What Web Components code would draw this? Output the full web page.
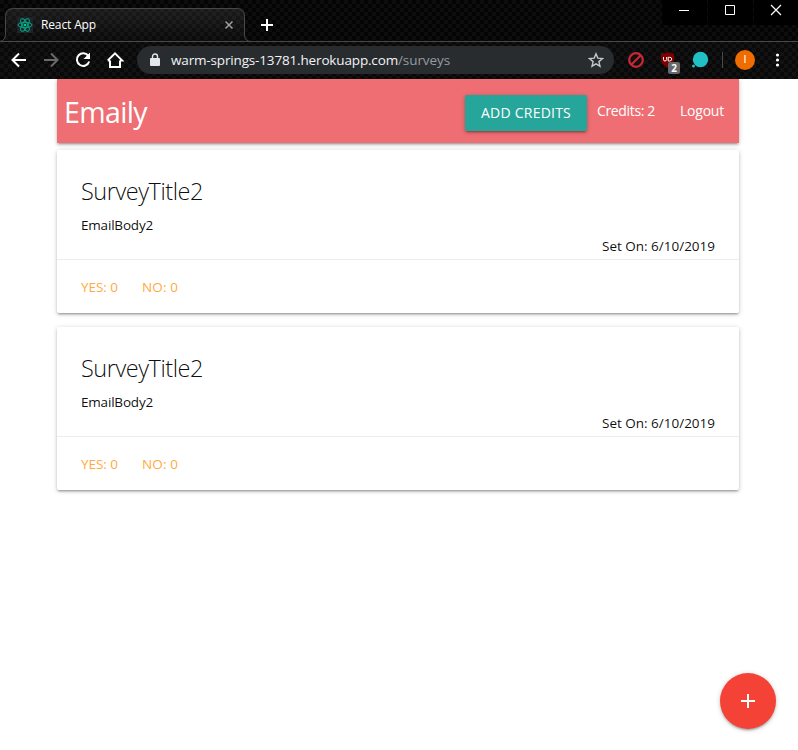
<!DOCTYPE html>
<html lang="en"><head><meta charset="utf-8"><title>React App</title>
<style>html,body{margin:0;height:100%;overflow:hidden;background:#fff;font-family:"Open Sans","Noto Sans",sans-serif}</style></head>
<body><app-window></app-window>
<script>
const define=(name,html,setup)=>customElements.define(name,class extends HTMLElement{
  connectedCallback(){
    if(!this.shadowRoot){this.attachShadow({mode:'open'}).innerHTML=html;if(setup)setup(this)}
  }
});
/* Text run whose tracking is adjusted to fill the width given in w. */
define('fit-text','<style>:host{display:inline-block;white-space:nowrap;flex:none}span{display:inline-block}</style><span></span>',el=>{
  const s=el.shadowRoot.querySelector('span');s.textContent=el.getAttribute('text');
  const w=+el.getAttribute('w');
  requestAnimationFrame(()=>{const n=s.getBoundingClientRect().width;s.style.letterSpacing=((w-n)/s.textContent.length)+'px';el.style.width=w+'px'});
});
define('browser-tab',`<style>
:host{display:block;position:relative;width:250px;height:42px;color:#fff}
.row{display:flex;align-items:center;height:33px;padding:8px 0 0 17px;font-size:12px;position:relative}
.shape{position:absolute;left:0;top:0}.logo{margin-right:8px}.close{margin-left:128px}
</style><svg class="shape" width="251" height="42"><defs><linearGradient id="g" x2="0" y2="1"><stop stop-color="#fff" stop-opacity=".09"/><stop offset="1" stop-color="#fff" stop-opacity=".02"/></linearGradient></defs><path d="M0 41.5Q5.500 40.500 5.500 34V16.500Q5.500 8.500 13.500 8.500H237Q244.500 8.500 244.500 16.500V34Q244.500 41.500 251 41.500" fill="url(#g)" stroke="#484848"/></svg>
<div class="row"><svg class="logo" width="16" height="16" viewBox="0 0 16 16"><path fill="#20232a" d="M0 0h16v16H0z"/><g fill="none" stroke="#00a985" stroke-width="1"><ellipse cx="8" cy="8" rx="7" ry="2.700"/><ellipse cx="8" cy="8" rx="7" ry="2.700" transform="rotate(60 8 8)"/><ellipse cx="8" cy="8" rx="7" ry="2.700" transform="rotate(120 8 8)"/></g><circle cx="8" cy="8" r="1.300" fill="#00c99b"/></svg><fit-text text="React App" w="55"></fit-text><svg class="close" width="10" height="10"><path d="M1.500 1.500l7 7m0-7l-7 7" stroke="#a0a0a0" stroke-width="1.500"/></svg></div>`);
define('window-controls',`<style>:host{display:flex;height:25px;gap:1px;margin-left:auto}span{width:45px;background:#000;height:25px}span:last-child{width:44px}svg{display:block}</style>
<span><svg width="45" height="25"><path d="M17 10.500h10" stroke="#fff"/></svg></span><span><svg width="45" height="25"><path d="M17.500 5.500h9v9h-9z" fill="none" stroke="#fff"/></svg></span><span><svg width="44" height="25"><path d="M17 5l10 10m0-10l-10 10" stroke="#fff" stroke-width="1.200"/></svg></span>`);
define('tool-bar',`<style>
:host{display:flex;align-items:center;border-top:1px solid #484848;box-sizing:border-box;background:rgba(255,255,255,.025);padding:0 0 1px 10px;height:38px;width:798px}
svg{flex:none;display:block}.omni{display:flex;align-items:center;width:477px;height:28px;border-radius:14px;background:#282c2f;margin-left:13px;color:#f1f3f4;font-size:13.500px;box-sizing:border-box;padding:0 10px 0 13px}
.lock{margin-right:11px}.path{color:#969ba0}.star{margin-left:auto}.nav{margin-right:14px}.back,.fwd{margin-right:14px}
.ub{position:relative;margin-left:15px;width:22px;height:24px}.badge{position:absolute;left:9px;top:14px;width:12px;height:12px;border-radius:2px;background:#66686b;color:#fff;font:bold 10px/12px "Open Sans";text-align:center}
.av{width:20px;height:20px;border-radius:50%;background:#ef6c00;color:#fff;text-align:center;font:11px/20px Roboto;margin-left:12px}
</style>
<svg class="back" width="18" height="18" viewBox="0 0 18 18"><path d="M16 9H3M9 2.500L2.500 9 9 15.500" fill="none" stroke="#fff" stroke-width="2"/></svg>
<svg class="fwd" width="18" height="18" viewBox="0 0 18 18"><path d="M2 9h13M9 2.500L15.500 9 9 15.500" fill="none" stroke="#696969" stroke-width="2"/></svg>
<svg class="nav" width="18" height="18" viewBox="0 0 18 18"><path d="M14.500 5.200A6.300 6.300 0 1 0 15.200 10.500" fill="none" stroke="#fff" stroke-width="2"/><path d="M16 1.500v6.500H9.500z" fill="#fff"/></svg>
<svg width="18" height="18" viewBox="0 0 18 18"><path d="M4 9.500V16h10V9.500M1.800 9.500L9 2.300l7.200 7.200H14M4 9.500H1.800" fill="none" stroke="#fff" stroke-width="2"/></svg>
<div class="omni"><svg class="lock" width="10" height="14"><path d="M1 5h8q1 0 1 1v6q0 1-1 1H1q-1 0-1-1V6q0-1 1-1z" fill="#e4e6e8"/><path d="M2.500 5V3.500a2.500 2.500 0 0 1 5 0V5" fill="none" stroke="#e4e6e8" stroke-width="1.400"/></svg>
<fit-text text="warm-springs-13781.herokuapp.com" w="227"></fit-text><fit-text class="path" text="/surveys" w="52"></fit-text>
<svg class="star" width="16" height="16" viewBox="0 0 16 16"><path d="M8 1.800l1.800 4.300 4.700.400-3.600 3.100 1.100 4.600L8 11.800l-4 2.400 1.100-4.600-3.600-3.100 4.700-.4z" fill="none" stroke="#c5c8ca" stroke-width="1.400"/></svg></div>
<svg style="margin-left:14px" width="16" height="16"><circle cx="8" cy="8" r="6.800" fill="none" stroke="#c62837" stroke-width="2.300"/><path d="M3.300 12.700l9.400-9.400" stroke="#c62837" stroke-width="2.300"/></svg>
<div class="ub"><svg width="16" height="18" viewBox="0 0 16 18" style="margin:3px 0 0 1px"><path d="M7.500 1Q10 3 14 2.500V9q0 4-6.500 7.500Q1 13 1 9V2.500Q5 3 7.500 1z" fill="#800000"/><path d="M3.500 6v2.500q0 1.500 1.500 1.500T6.700 8.500V6M8.200 6.300h1.500q2 0 2 1.800t-2 1.900H8.200z" fill="none" stroke="#fff"/></svg><span class="badge">2</span></div>
<svg style="margin-left:10px" width="18" height="18"><circle cx="9.500" cy="8.500" r="7.700" fill="#20c0c5"/><circle cx="2.500" cy="15" r="1.500" fill="#20c0c5"/></svg>
<svg style="margin-left:12px" width="2" height="16"><path d="M1.500 0v16" stroke="#494949"/></svg>
<div class="av">I</div><svg style="margin-left:20px" width="5" height="14"><g fill="#fff"><circle cx="2.500" cy="2" r="1.600"/><circle cx="2.500" cy="7" r="1.600"/><circle cx="2.500" cy="12" r="1.600"/></g></svg>`);
define('browser-chrome',`<style>
:host{display:block;height:79px;background:repeating-conic-gradient(#040404 0 25%,#0d0d0d 0 50%) 0 0/8px 8px;overflow:hidden}
.top{display:flex;height:41px}.plus{margin:18px 0 0 10px}
</style><div class="top"><browser-tab></browser-tab><svg class="plus" width="14" height="14"><path d="M7 1v12M1 7h12" stroke="#fff" stroke-width="2"/></svg><window-controls></window-controls></div><tool-bar></tool-bar>`);
const shadow='0 2px 2px 0 rgba(0,0,0,.14),0 3px 1px -2px rgba(0,0,0,.12),0 1px 5px 0 rgba(0,0,0,.2)';
define('app-header',`<style>
:host{display:flex;height:64px;box-sizing:border-box;background:#ee6e73;color:#fff;box-shadow:${shadow};padding:0 15px 0 7px;font-size:14px;line-height:64px}
.logo{font-size:28.500px;margin-right:auto;line-height:66px}
.btn{height:36px;width:122px;border-radius:2px;background:#26a69a;box-shadow:${shadow};line-height:36px;margin:16px 10px 0 0;text-align:center}
.credits{margin-right:25px}</style>
<fit-text class="logo" text="Emaily" w="83"></fit-text><div class="btn"><fit-text text="ADD CREDITS" w="90"></fit-text></div><fit-text class="credits" text="Credits: 2" w="58"></fit-text><fit-text text="Logout" w="44"></fit-text>`);
define('survey-card',`<style>
:host{display:block;height:163px;border-radius:2px;background:#fff;box-shadow:${shadow};color:rgba(0,0,0,.95);font-size:13.500px}
.content{height:109px;padding:24px;box-sizing:border-box}.title{display:block;font-size:23.500px;font-weight:300;line-height:34px}
.body{display:block;line-height:22px;margin-top:6px}.date{display:block;line-height:21px;margin-left:auto}
.action{height:54px;box-sizing:border-box;border-top:1px solid rgba(160,160,160,.2);padding:16px 24px;display:flex;gap:24px;color:#ffab40;line-height:22px}
</style><div class="content"><fit-text class="title" text="SurveyTitle2" w="122"></fit-text><fit-text class="body" text="EmailBody2" w="72"></fit-text><fit-text class="date" text="Set On: 6/10/2019" w="113"></fit-text></div><div class="action"><fit-text text="YES: 0" w="37"></fit-text><fit-text text="NO: 0" w="36"></fit-text></div>`);
define('floating-button',`<style>:host{position:fixed;right:22px;bottom:21px;width:56px;height:56px;border-radius:50%;background:#f44336;box-shadow:${shadow};display:block}</style><svg width="56" height="56"><path d="M28 21v14M21 28h14" stroke="#fff" stroke-width="2"/></svg>`);
define('app-window',`<style>:host{display:block;height:750px}main{width:682px;margin-left:57px;display:flex;flex-direction:column}.list{display:flex;flex-direction:column;gap:14px;margin-top:7px}</style>
<browser-chrome></browser-chrome><main><app-header></app-header><div class="list"><survey-card></survey-card><survey-card></survey-card></div></main><floating-button></floating-button>`);
</script></body></html>
